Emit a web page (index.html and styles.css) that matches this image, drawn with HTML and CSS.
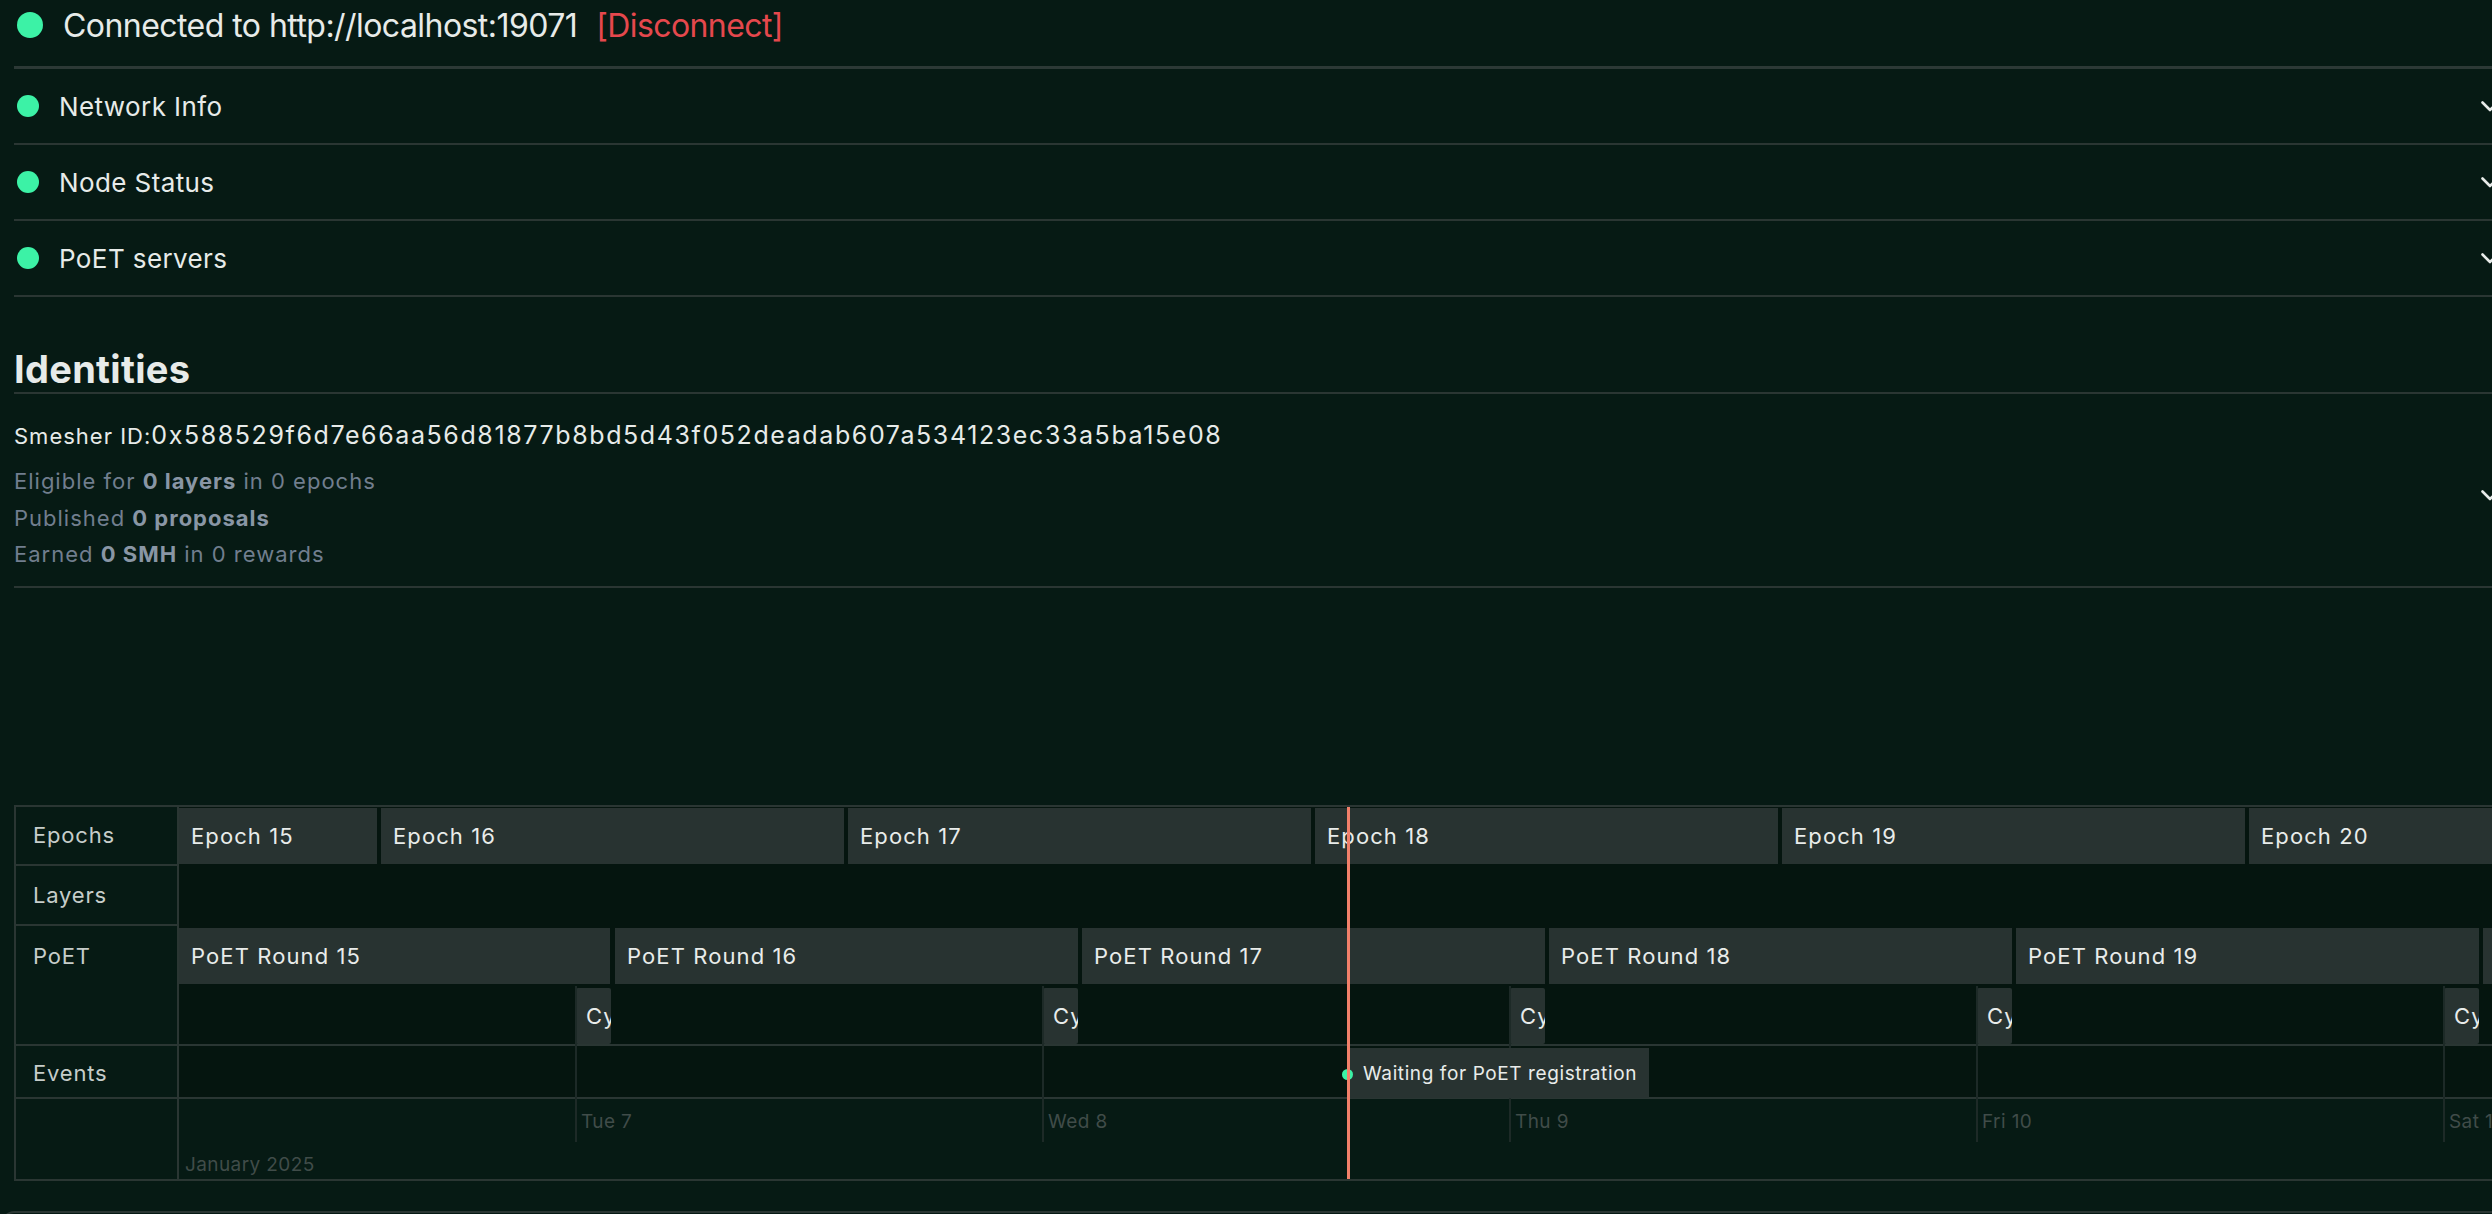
FILE: index.html
```html
<!DOCTYPE html>
<html lang="en">
<head>
<meta charset="utf-8">
<title>Smesher Dashboard</title>
<link rel="stylesheet" href="styles.css">
</head>
<body>
<div class="page">
  <header class="conn">
    <span class="dot dot-lg"></span>
    <span class="conn-text">Connected to http://localhost:19071</span>
    <a class="disconnect">[Disconnect]</a>
  </header>

  <section class="acc">
    <div class="acc-item">
      <span class="dot"></span>
      <span class="acc-title">Network Info</span>
      <svg class="chev" viewBox="0 0 18 11" width="18" height="11"><path d="M1.5 1.5 L9 9 L16.5 1.5"/></svg>
    </div>
    <div class="acc-item">
      <span class="dot"></span>
      <span class="acc-title">Node Status</span>
      <svg class="chev" viewBox="0 0 18 11" width="18" height="11"><path d="M1.5 1.5 L9 9 L16.5 1.5"/></svg>
    </div>
    <div class="acc-item">
      <span class="dot"></span>
      <span class="acc-title">PoET servers</span>
      <svg class="chev" viewBox="0 0 18 11" width="18" height="11"><path d="M1.5 1.5 L9 9 L16.5 1.5"/></svg>
    </div>
  </section>

  <h2 class="ident-title">Identities</h2>
  <div class="ident">
    <div class="ident-body">
      <div class="smesher"><span class="sm-label">Smesher ID:</span><span class="sm-id">0x588529f6d7e66aa56d81877b8bd5d43f052deadab607a534123ec33a5ba15e08</span></div>
      <div class="stat">Eligible for <b>0 layers</b> in 0 epochs</div>
      <div class="stat">Published <b>0 proposals</b></div>
      <div class="stat">Earned <b>0 SMH</b> in 0 rewards</div>
    </div>
    <svg class="chev" viewBox="0 0 18 11" width="18" height="11"><path d="M1.5 1.5 L9 9 L16.5 1.5"/></svg>
  </div>

  <div class="timeline">
    <div class="tl-labels">
      <div class="tl-label r-epochs">Epochs</div>
      <div class="tl-label r-layers">Layers</div>
      <div class="tl-label r-poet">PoET</div>
      <div class="tl-label r-events">Events</div>
      <div class="tl-label r-axis"></div>
    </div>
    <div class="tl-content">
      <div class="tl-row r-epochs dark">
        <div class="bar" style="left:0px;width:198px">Epoch 15</div>
        <div class="bar" style="left:202px;width:463px">Epoch 16</div>
        <div class="bar" style="left:669px;width:463px">Epoch 17</div>
        <div class="bar" style="left:1136px;width:463px">Epoch 18</div>
        <div class="bar" style="left:1603px;width:463px">Epoch 19</div>
        <div class="bar" style="left:2070px;width:463px">Epoch 20</div>
      </div>
      <div class="tl-row r-layers dark"></div>
      <div class="tl-row r-poet dark">
        <div class="bar" style="left:0px;width:431px">PoET Round 15</div>
        <div class="bar" style="left:436px;width:463px">PoET Round 16</div>
        <div class="bar" style="left:903px;width:463px">PoET Round 17</div>
        <div class="bar" style="left:1370px;width:463px">PoET Round 18</div>
        <div class="bar" style="left:1837px;width:463px">PoET Round 19</div>
        <div class="bar" style="left:2304px;width:463px">PoET Round 20</div>
        <div class="bar sub" style="left:397px">Cycle gap</div>
        <div class="bar sub" style="left:864px">Cycle gap</div>
        <div class="bar sub" style="left:1331px">Cycle gap</div>
        <div class="bar sub" style="left:1798px">Cycle gap</div>
        <div class="bar sub" style="left:2265px">Cycle gap</div>
      </div>
      <div class="tl-row r-events dark lined"></div>
      <div class="tl-row r-axis">
        <span class="day" style="left:402px">Tue 7</span>
        <span class="day" style="left:869px">Wed 8</span>
        <span class="day" style="left:1336px">Thu 9</span>
        <span class="day" style="left:1803px">Fri 10</span>
        <span class="day" style="left:2270px">Sat 11</span>
        <span class="month">January 2025</span>
      </div>
      <div class="gridline" style="left:396px"></div>
      <div class="gridline" style="left:863px"></div>
      <div class="gridline" style="left:1330px"></div>
      <div class="gridline" style="left:1797px"></div>
      <div class="gridline" style="left:2264px"></div>
      <div class="event" style="left:1169px"><span class="event-dot"></span>Waiting for PoET registration</div>
      <div class="now" style="left:1168px"></div>
    </div>
  </div>
  <div class="below"></div>
</div>
</body>
</html>
```

FILE: styles.css
```css
html, body {
  margin: 0;
  padding: 0;
  background: #061a14;
  overflow: hidden;
}
body {
  font-family: "Inter", "Liberation Sans", sans-serif;
  color: #e7ebe9;
}
.page {
  width: 2490px;
  margin-left: 14px;
}

.dot {
  display: inline-block;
  width: 22px;
  height: 22px;
  border-radius: 50%;
  background: #3cf2a6;
  flex: none;
}
.dot-lg {
  width: 26px;
  height: 26px;
}

.conn {
  display: flex;
  align-items: center;
  box-sizing: border-box;
  height: 69px;
  padding: 0 0 16px 3px;
  gap: 20px;
  border-bottom: 3px solid #2c3936;
  font-size: 32px;
}
.conn-text {
  letter-spacing: -0.55px;
}
.disconnect {
  color: #e5484d;
  margin-left: -1px;
  letter-spacing: -0.6px;
}

.acc-item {
  display: flex;
  align-items: center;
  height: 74px;
  padding-left: 3px;
  gap: 20px;
  border-bottom: 2px solid #2a3633;
  font-size: 26px;
  letter-spacing: 0.4px;
}
.chev {
  margin-left: auto;
  margin-right: 5px;
  flex: none;
}
.chev path {
  fill: none;
  stroke: #e7ebe9;
  stroke-width: 2.6;
  stroke-linecap: round;
  stroke-linejoin: round;
}

.ident-title {
  margin: 49px 0 0 0;
  font-size: 38px;
  line-height: 46px;
  font-weight: 700;
  border-bottom: 2px solid #2a3633;
  letter-spacing: 0.3px;
}
.ident {
  display: flex;
  align-items: center;
  padding: 24px 0 13px 0;
  border-bottom: 2px solid #2a3633;
}
.smesher {
  line-height: 34px;
  margin-bottom: 8px;
}
.sm-label {
  font-size: 22px;
  letter-spacing: 1px;
}
.sm-id {
  font-size: 25px;
  letter-spacing: 1.6px;
}
.stat {
  font-size: 22px;
  line-height: 36.5px;
  color: #717e8e;
  letter-spacing: 1px;
}
.stat b {
  color: #8996a5;
  font-weight: 700;
}

.timeline {
  margin-top: 217px;
  display: flex;
  border: 2px solid #2a3633;
  border-right: none;
}
.tl-labels {
  width: 161px;
  flex: none;
  border-right: 2px solid #2a3633;
}
.tl-label {
  box-sizing: border-box;
  padding-left: 17px;
  font-size: 22px;
  letter-spacing: 0.8px;
  color: #c6cdca;
  border-bottom: 2px solid #2a3633;
}
.r-epochs { height: 59px; line-height: 57px; }
.r-layers { height: 60px; line-height: 58px; }
.r-poet { height: 120px; line-height: 60px; }
.r-events { height: 53px; line-height: 54px; }
.r-axis { height: 80px; }
.tl-label.r-axis { border-bottom: none; }

.tl-content {
  position: relative;
  flex: 1;
  overflow: hidden;
}
.tl-row {
  position: relative;
  box-sizing: border-box;
  border-bottom: 2px solid transparent;
}
.tl-row.r-axis { border-bottom: none; }
.tl-row.dark { background: #05150f; }
.tl-row.r-poet { border-bottom-color: #2a3633; }
.tl-row.lined { border-bottom-color: #2a3633; }

.bar {
  position: absolute;
  top: 1px;
  height: 56px;
  box-sizing: border-box;
  padding-left: 12px;
  background: #283331;
  color: #e9ecea;
  font-size: 22px;
  letter-spacing: 1.1px;
  line-height: 56px;
  white-space: nowrap;
  overflow: hidden;
}
.r-poet .bar { top: 2px; }
.r-poet .bar.sub {
  top: 62px;
  width: 35px;
  padding-left: 10px;
  border-radius: 2px;
}

.gridline {
  position: absolute;
  top: 179px;
  width: 2px;
  height: 156px;
  background: #1d2a27;
}
.day, .month {
  position: absolute;
  font-size: 19px;
  line-height: 24px;
  letter-spacing: 0.4px;
  color: #404c49;
  white-space: nowrap;
}
.day { top: 11px; }
.month { top: 54px; left: 6px; }

.event {
  position: absolute;
  top: 241px;
  width: 301px;
  height: 50px;
  box-sizing: border-box;
  padding-left: 15px;
  background: #283331;
  color: #e9ecea;
  font-size: 19px;
  letter-spacing: 0.6px;
  line-height: 52px;
  white-space: nowrap;
}
.event-dot {
  position: absolute;
  left: -6px;
  top: 21px;
  width: 11px;
  height: 11px;
  border-radius: 50%;
  background: #3cf2a6;
}

.now {
  position: absolute;
  top: 0;
  bottom: 0;
  width: 3px;
  background: #f2806a;
}

.below {
  margin-top: 30px;
  margin-left: -12px;
  height: 20px;
  border-top: 2px solid #2a3633;
  border-left: 2px solid #2a3633;
  border-top-left-radius: 12px;
}
```
